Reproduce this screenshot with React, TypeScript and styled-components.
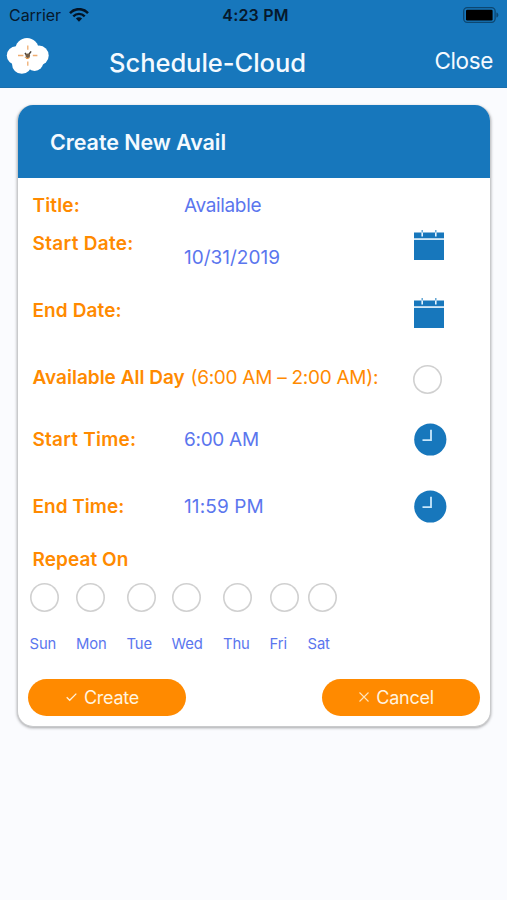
import React from "react";
import styled, { createGlobalStyle } from "styled-components";

const BLUE = "#1777bc";
const ORANGE = "#ff8a00";
const INDIGO = "#5b76ee";

const GlobalStyle = createGlobalStyle`
  * { box-sizing: border-box; }
  body {
    margin: 0;
    background: #fafbfe;
    font-family: Inter, "Liberation Sans", sans-serif;
  }
`;

const Screen = styled.main`
  width: 507px;
  height: 900px;
  overflow: hidden;
`;

const TopBar = styled.header`
  height: 88px;
  background: ${BLUE};
  border-bottom: 1px solid #1b6fac;
`;

const StatusBar = styled.div`
  height: 30px;
  display: grid;
  grid-template-columns: 1fr auto 1fr;
  align-items: center;
  padding: 0 8px 0 9px;
  color: #06192c;
  font-size: 16px;
`;

const Carrier = styled.div`
  display: flex;
  align-items: center;
  gap: 8px;
  letter-spacing: -0.05px;
`;

const Clock = styled.div`
  padding-left: 3px;
  font-weight: 600;
  letter-spacing: 0.2px;
`;

const Battery = styled.svg`
  justify-self: end;
`;

const NavBar = styled.div`
  height: 57px;
  display: flex;
  align-items: flex-start;
  padding: 8px 14px 0 6px;
  color: #f4faff;
`;

const AppName = styled.h1`
  margin: 8px 0 0 60px;
  font-size: 25.5px;
  line-height: 34px;
  font-weight: 500;
  letter-spacing: -0.03px;
`;

const CloseButton = styled.button`
  margin: 7px 0 0 auto;
  padding: 0;
  border: 0;
  background: none;
  color: inherit;
  font: 400 22.5px/32px Inter, sans-serif;
  letter-spacing: -0.35px;
`;

const Card = styled.section`
  margin: 17px 16px 0 17px;
  height: 622px;
  border-radius: 16px;
  background: #fff;
  border: 1px solid #c9cacc;
  border-top: 0;
  box-shadow: 0 1px 3px rgba(0, 0, 0, 0.35);
  overflow: hidden;
`;

const CardTitle = styled.h2`
  margin: 0 -1px;
  height: 73px;
  padding-left: 33px;
  background: ${BLUE};
  color: #f4faff;
  font-size: 21.5px;
  font-weight: 600;
  line-height: 74px;
  letter-spacing: -0.07px;
`;

const Fields = styled.div`
  padding-top: 1px;
`;

const Row = styled.div<{ $height: number }>`
  height: ${(p) => p.$height}px;
  padding-left: 14.5px;
  display: grid;
  grid-template-columns: 151.5px 230px auto;
  align-items: start;
`;

const Label = styled.span<{ $top?: number; $spacing?: number; $wide?: boolean }>`
  grid-column: ${(p) => (p.$wide ? "1 / 3" : "1")};
  margin-top: ${(p) => p.$top ?? 0}px;
  color: ${ORANGE};
  font-size: 19px;
  line-height: 26px;
  font-weight: 600;
  letter-spacing: ${(p) => p.$spacing ?? 0}px;
  white-space: nowrap;
`;

const Hours = styled.span`
  margin-left: 1px;
  font-weight: 400;
  letter-spacing: -0.27px;
`;

const Value = styled.span<{ $top?: number; $spacing?: number }>`
  grid-column: 2;
  margin-top: ${(p) => p.$top ?? 0}px;
  color: ${INDIGO};
  font-size: 19px;
  line-height: 26px;
  letter-spacing: ${(p) => p.$spacing ?? 0}px;
`;

const IconSlot = styled.span<{ $top?: number; $left?: number }>`
  grid-column: 3;
  display: flex;
  margin: ${(p) => p.$top ?? 0}px 0 0 ${(p) => p.$left ?? 0}px;
`;

const Radio = styled.span`
  display: block;
  width: 29px;
  height: 29px;
  border-radius: 50%;
  box-shadow: inset 0 0 0 1.6px #d0d0d0;
`;

const Days = styled.div`
  display: grid;
  grid-template-columns: 46.5px 50.5px 45px 51.5px 46.5px 38px 50px;
  padding-left: 11.5px;
  margin-top: 10px;
`;

const Day = styled.div`
  display: grid;
  gap: 22px;
  color: ${INDIGO};
  font-size: 14.8px;
  line-height: 20px;
  letter-spacing: -0.1px;
`;

const Actions = styled.div`
  display: flex;
  justify-content: space-between;
  padding: 25px 10px 0;
`;

const Action = styled.button`
  width: 158px;
  height: 37px;
  padding: 0 9px 0 0;
  border: 0;
  border-radius: 19px;
  background: ${ORANGE};
  color: #fff3df;
  display: flex;
  align-items: center;
  justify-content: center;
  gap: 7px;
  font: 400 18px/24px Inter, sans-serif;
  letter-spacing: -0.25px;
`;

const WifiIcon = () => (
  <svg width="20" height="14" viewBox="0 0 20 14" fill="none">
    <path d="M1 5.1C6-.2 14-.2 19 5.1" stroke="#031426" strokeWidth="2.5" />
    <path d="M4.3 8.3c3.2-3.2 8.2-3.2 11.4 0" stroke="#031426" strokeWidth="2.4" />
    <path d="M6.9 10.6c1.8-1.7 4.4-1.7 6.2 0L10 13.7z" fill="#031426" />
  </svg>
);

const BatteryIcon = () => (
  <Battery width="36" height="16" viewBox="0 0 36 16">
    <rect x=".7" y=".7" width="31.4" height="14.6" rx="3.5" fill="none" stroke="#0d4771" strokeWidth="1.3" />
    <rect x="3" y="2.8" width="26.6" height="10.6" rx="1.2" fill="#000" />
    <path d="M33.4 5.5c2.6.5 2.6 4.5 0 5z" fill="#0d4771" />
  </Battery>
);

const CloudLogo = () => (
  <svg width="43" height="37" viewBox="0 0 43 37">
    <g fill="#fff">
      <ellipse cx="21" cy="12" rx="11.8" ry="12" />
      <circle cx="10" cy="17.5" r="9.2" />
      <ellipse cx="33" cy="17.5" rx="9.7" ry="10" />
      <circle cx="15.8" cy="26" r="9.8" />
      <circle cx="28.6" cy="24.5" r="8.5" />
      <path d="M12 12h20v17H12z" />
    </g>
    <path d="M21.8 7.5v4.3M21.8 23.5v4.2M12 17.5h5.4M26.8 17.5h4.6" stroke="#efad70" strokeWidth="1.3" />
    <path d="m19 15 2.5 3.2 3.6-4.8" stroke="#4b4238" strokeWidth="1.5" fill="none" />
    <circle cx="21.8" cy="17.8" r="2.3" fill="#735d46" />
    <path d="M19 19.2c1 1.6 3 1.8 4.6.4" stroke="#e98b2c" strokeWidth="1" fill="none" />
  </svg>
);

const CalendarIcon = () => (
  <svg width="30" height="31" viewBox="0 0 30 31">
    <path d="M0 2.5h30v6H0zM0 9.8h30V30H0z" fill={BLUE} />
    <path d="M0 9.1h30" stroke="#d9ecfa" strokeWidth="1.3" />
    <path d="M8.2 2v4.6M21.8 2v4.6" stroke="#e6f5ff" strokeWidth="1.6" />
    <path d="M8.2 0v2.6M21.8 0v2.6" stroke="#5ba1d1" strokeWidth="1.4" />
  </svg>
);

const ClockIcon = () => (
  <svg width="33" height="33" viewBox="0 0 33 33">
    <circle cx="16.3" cy="16.5" r="16.1" fill={BLUE} />
    <path d="M17 6.8v10.4H8.5" stroke="#c8e7fb" strokeWidth="1.8" fill="none" />
  </svg>
);

const CheckIcon = () => (
  <svg width="11" height="9" viewBox="0 0 11 9" fill="none">
    <path d="m.7 4.3 3 3L10.3.6" stroke="#fff0d8" strokeWidth="1.3" />
  </svg>
);

const CrossIcon = () => (
  <svg width="10" height="12" viewBox="0 0 10 12">
    <path d="m.5.5 9 9m0-9-9 9" stroke="#ffe3bb" strokeWidth="1.1" />
  </svg>
);

const dayNames = ["Sun", "Mon", "Tue", "Wed", "Thu", "Fri", "Sat"];

export default function App() {
  return (
    <Screen>
      <GlobalStyle />
      <TopBar>
        <StatusBar>
          <Carrier>Carrier <WifiIcon /></Carrier>
          <Clock>4:23 PM</Clock>
          <BatteryIcon />
        </StatusBar>
        <NavBar>
          <CloudLogo />
          <AppName>Schedule-Cloud</AppName>
          <CloseButton>Close</CloseButton>
        </NavBar>
      </TopBar>
      <Card>
        <CardTitle>Create New Avail</CardTitle>
        <Fields>
          <Row $height={51}>
            <Label $top={14} $spacing={0.15}>Title:</Label>
            <Value $top={14} $spacing={-0.35}>Available</Value>
          </Row>
          <Row $height={67}>
            <Label $top={1} $spacing={0.3}>Start Date:</Label>
            <Value $top={15}>10/31/2019</Value>
            <IconSlot><CalendarIcon /></IconSlot>
          </Row>
          <Row $height={68}>
            <Label $top={1} $spacing={0.12}>End Date:</Label>
            <IconSlot $top={1}><CalendarIcon /></IconSlot>
          </Row>
          <Row $height={58}>
            <Label $wide>Available All Day <Hours>(6:00 AM – 2:00 AM):</Hours></Label>
            <IconSlot $left={-1}><Radio /></IconSlot>
          </Row>
          <Row $height={68}>
            <Label $top={4} $spacing={0.22}>Start Time:</Label>
            <Value $top={4} $spacing={-0.3}>6:00 AM</Value>
            <IconSlot><ClockIcon /></IconSlot>
          </Row>
          <Row $height={56}>
            <Label $top={3}>End Time:</Label>
            <Value $top={3} $spacing={0.1}>11:59 PM</Value>
            <IconSlot $top={-1}><ClockIcon /></IconSlot>
          </Row>
          <Row $height={26}>
            <Label $spacing={0.06}>Repeat On</Label>
          </Row>
          <Days>
            {dayNames.map((name) => (
              <Day key={name}><Radio />{name}</Day>
            ))}
          </Days>
        </Fields>
        <Actions>
          <Action><CheckIcon />Create</Action>
          <Action><CrossIcon />Cancel</Action>
        </Actions>
      </Card>
    </Screen>
  );
}
